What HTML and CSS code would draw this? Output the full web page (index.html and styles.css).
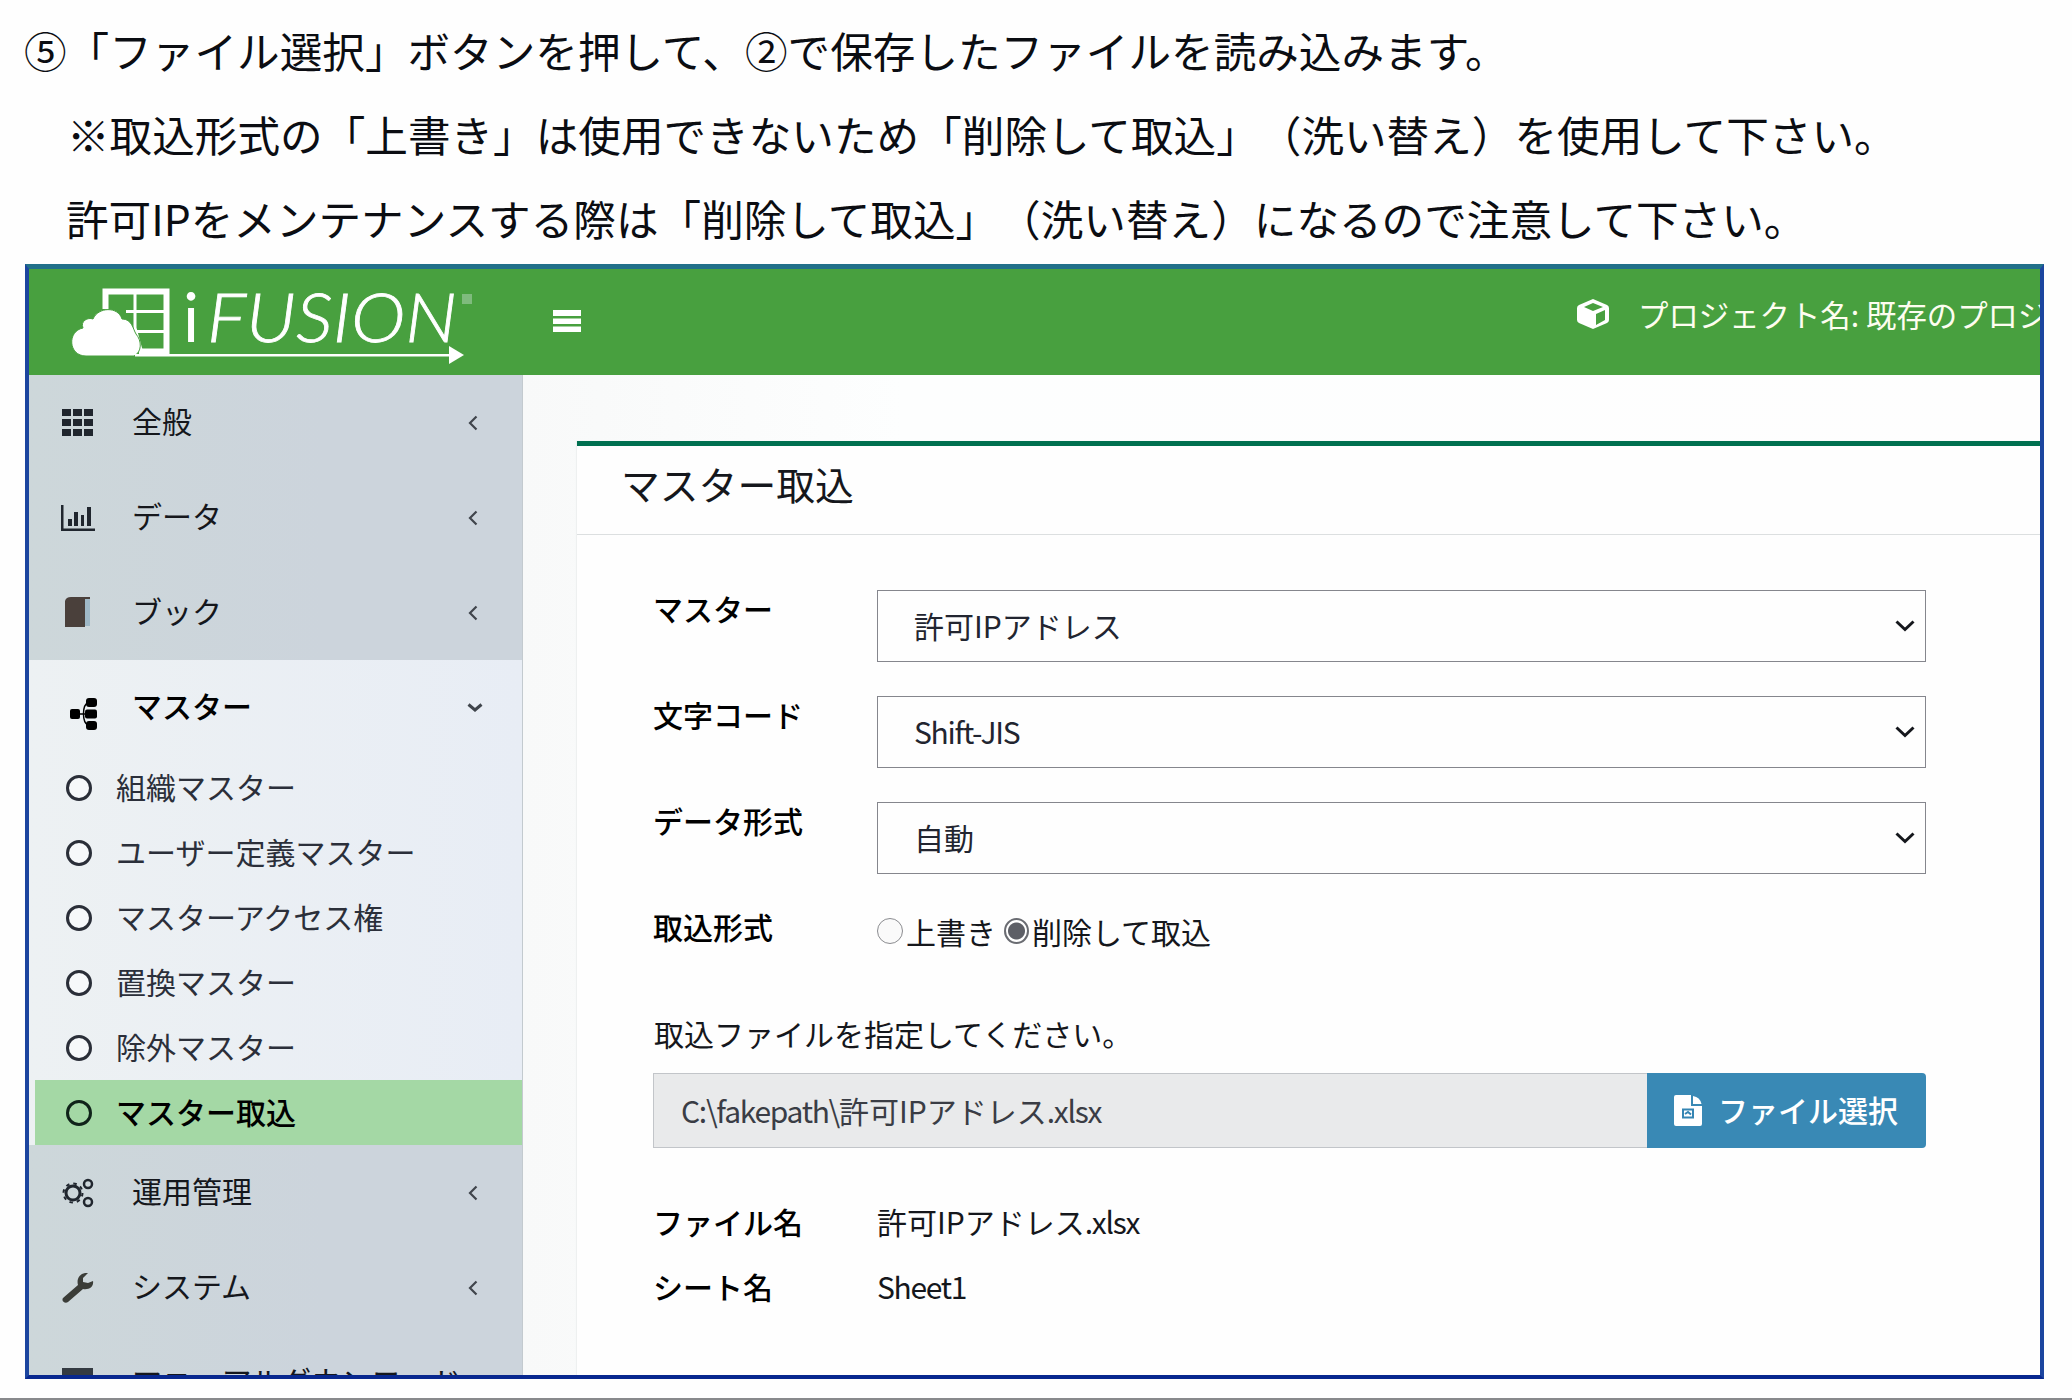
FILE: index.html
```html
<!DOCTYPE html>
<html lang="ja">
<head>
<meta charset="utf-8">
<title>マスター取込</title>
<link rel="stylesheet" href="styles.css">
</head>
<body>
<div class="guide">
  <p class="guide-line">⑤「ファイル選択」ボタンを押して、②で保存したファイルを読み込みます。</p>
  <p class="guide-line guide-sub">※取込形式の「上書き」は使用できないため「削除して取込」（洗い替え）を使用して下さい。</p>
  <p class="guide-line guide-sub last">許可IPをメンテナンスする際は「削除して取込」（洗い替え）になるので注意して下さい。</p>
</div>

<div class="app">
  <header class="topbar">
    <svg class="logo" width="410" height="84" viewBox="0 0 410 84" fill="#fff">
      <path d="M34.500 21V3.500H95.500V63.500H68" fill="none" stroke="#fff" stroke-width="6"/>
      <path d="M64 4V40L70 62M55 23.500H94M66 43.500H94" fill="none" stroke="#fff" stroke-width="3"/>
      <path d="M15 68C-3 68-4 43 12 40C9 33 17 29 22 31C27 19 47 18 51 31C61 31 62 41 65 46C71 53 71 64 63 68Z" stroke="#48a03f" stroke-width="1"/>
      <path d="M64 66H379V68.500H64Z"/>
      <path d="M378 58L393 67L378 76Z"/>
      <text class="logo-i" x="112" y="54">i</text>
      <text class="logo-name" x="136" y="54" textLength="250" lengthAdjust="spacingAndGlyphs">FUSION</text>
      <rect x="391" y="6" width="10" height="10" fill="#7fbb7d"/>
    </svg>
    <svg class="burger" width="28" height="22" viewBox="0 0 28 22" fill="#fff"><path d="M0 0H28V6H0ZM0 8.500H28V14H0ZM0 16.500H28V22H0Z"/></svg>
    <div class="project">
      <svg width="32" height="30" viewBox="0 0 32 30"><path d="M16 0L30 6Q32 7 32 9V21Q32 23 30 24L16 30L2 24Q0 23 0 21V9Q0 7 2 6Z" fill="#fff"/><path d="M7 8L16 4L26 8L16 12ZM19 15L28 11V21L19 26Z" fill="#48a03f"/></svg>
      <span>プロジェクト名: 既存のプロジ</span>
    </div>
  </header>

  <div class="main">
    <nav class="sidebar">
      <a class="item"><svg class="ic" width="32" height="28" viewBox="0 0 32 28"><path d="M0 0H9V7H0ZM11 0H20V7H11ZM22 0H31V7H22ZM0 10H9V17H0ZM11 10H20V17H11ZM22 10H31V17H22ZM0 20H9V27H0ZM11 20H20V27H11ZM22 20H31V27H22Z"/></svg><span>全般</span><svg class="arrow" width="10" height="16" viewBox="0 0 10 16"><path d="M8.500 1.500L2 8L8.500 14.500"/></svg></a>
      <a class="item"><svg class="ic" width="34" height="28" viewBox="0 0 34 28"><path d="M0 1H2.500V24.500H34V27H0ZM7 15H11V22H7ZM13 8H17V22H13ZM20 11H23V22H20ZM26 3H30V22H26Z"/></svg><span>データ</span><svg class="arrow" width="10" height="16" viewBox="0 0 10 16"><path d="M8.500 1.500L2 8L8.500 14.500"/></svg></a>
      <a class="item"><svg class="ic book" width="30" height="32" viewBox="0 0 30 32"><path d="M22 2H27V29H22Z" fill="#9fb8c6"/><path d="M2 4Q3 0 8 0H27V2H22V30H2Z" fill="#4a403b"/></svg><span>ブック</span><svg class="arrow" width="10" height="16" viewBox="0 0 10 16"><path d="M8.500 1.500L2 8L8.500 14.500"/></svg></a>

      <div class="open">
        <a class="item strong"><svg class="ic tree" width="28" height="32" viewBox="0 0 28 32"><path d="M8 16H18M18 5C12 7 12 24 18 27" fill="none" stroke="#000" stroke-width="1.500"/><rect x="0" y="11" width="10" height="10" rx="2"/><rect x="16" y="0" width="11" height="9" rx="3"/><rect x="15" y="11.500" width="12" height="9" rx="2"/><rect x="16" y="23" width="11" height="9" rx="3"/></svg><span>マスター</span><svg class="arrow down" width="16" height="10" viewBox="0 0 16 10"><path d="M1.500 1.500L8 7L14.500 1.500"/></svg></a>
        <a class="sub"><i></i><span>組織マスター</span></a>
        <a class="sub"><i></i><span>ユーザー定義マスター</span></a>
        <a class="sub"><i></i><span>マスターアクセス権</span></a>
        <a class="sub"><i></i><span>置換マスター</span></a>
        <a class="sub"><i></i><span>除外マスター</span></a>
        <a class="sub active"><i></i><span>マスター取込</span></a>
      </div>

      <a class="item"><svg class="ic" width="32" height="30" viewBox="0 0 32 30"><g fill="none" stroke="#20262e"><circle cx="11" cy="15" r="7" stroke-width="3"/><circle cx="11" cy="15" r="9.500" stroke-width="2" stroke-dasharray="3.500 3.960"/><circle cx="26" cy="6" r="4" stroke-width="2.500"/><circle cx="26" cy="24" r="4" stroke-width="2.500"/></g></svg><span>運用管理</span><svg class="arrow" width="10" height="16" viewBox="0 0 10 16"><path d="M8.500 1.500L2 8L8.500 14.500"/></svg></a>
      <a class="item"><svg class="ic wrench" width="32" height="30" viewBox="0 0 32 30"><path d="M26 0L21 5V9L26 10L31 8C32 14 27 17 21 16L6 29C3 31-1 28 1 25L16 12C14 5 19-1 26 0Z" fill="#3b3d38"/></svg><span>システム</span><svg class="arrow" width="10" height="16" viewBox="0 0 10 16"><path d="M8.500 1.500L2 8L8.500 14.500"/></svg></a>
      <a class="item"><svg class="ic" width="32" height="30" viewBox="0 0 32 30"><path d="M0 0H31V8H0ZM4 10H28V28H4Z" fill="#343b42"/></svg><span>マニュアルダウンロード</span></a>
    </nav>

    <div class="content">
      <section class="panel">
        <h1>マスター取込</h1>
        <div class="form">
          <div class="row">
            <label>マスター</label>
            <div class="select"><span>許可IPアドレス</span><svg width="20" height="12" viewBox="0 0 20 12"><path d="M1.500 1.500L10 9.500L18.500 1.500"/></svg></div>
          </div>
          <div class="row">
            <label>文字コード</label>
            <div class="select"><span class="latin">Shift-JIS</span><svg width="20" height="12" viewBox="0 0 20 12"><path d="M1.500 1.500L10 9.500L18.500 1.500"/></svg></div>
          </div>
          <div class="row">
            <label>データ形式</label>
            <div class="select"><span>自動</span><svg width="20" height="12" viewBox="0 0 20 12"><path d="M1.500 1.500L10 9.500L18.500 1.500"/></svg></div>
          </div>
          <div class="row radios">
            <label>取込形式</label>
            <div class="choices"><i class="radio"></i><span class="choice">上書き</span><i class="radio on"></i><span class="choice">削除して取込</span></div>
          </div>
          <p class="hint">取込ファイルを指定してください。</p>
          <div class="file">
            <div class="path"><span class="latin">C:\fakepath\</span>許可IPアドレス<span class="latin">.xlsx</span></div>
            <div class="button">
              <svg width="28" height="31" viewBox="0 0 28 31"><path d="M2 0H17V11H28V29Q28 31 26 31H2Q0 31 0 29V2Q0 0 2 0Z" fill="#fff"/><path d="M19 1Q26 2 27.500 9H19Z" fill="#fff"/><path d="M9 14.500H19V22.500H9ZM11 19L14 17L17 19.500" fill="none" stroke="#3585b3" stroke-width="2"/></svg>
              <span>ファイル選択</span>
            </div>
          </div>
          <dl>
            <dt>ファイル名</dt><dd>許可IPアドレス<span class="latin">.xlsx</span></dd>
            <dt>シート名</dt><dd><span class="latin">Sheet1</span></dd>
          </dl>
        </div>
      </section>
    </div>
  </div>
</div>
</body>
</html>
```
FILE: styles.css
```css
* { box-sizing: border-box; }
html, body { height: 100%; }
body {
  margin: 0;
  padding: 8px 28px 0 25px;
  height: 1400px;
  overflow: hidden;
  background: #fefefe;
  border-bottom: 2px solid #88898c;
  color: #15171c;
  font-family: "Noto Sans CJK JP", sans-serif;
  font-size: 30px;
  text-spacing-trim: space-all;
}
p, h1, dl, dd { margin: 0; }

.guide { height: 256px; font-size: 42.620px; color: #0b0d12; }
.guide-line { height: 84px; line-height: 84px; white-space: nowrap; margin-left: -1px; }
.guide-sub { margin-left: 42px; }
.guide-sub.last { margin-left: 41px; }

.app {
  height: 1115px;
  display: flex;
  flex-direction: column;
  border: 4px solid #1c459f;
  border-top: 5px solid #22708a;
  border-bottom-color: #08288f;
  overflow: hidden;
}
.topbar {
  height: 106px;
  flex: none;
  display: flex;
  background: #48a03f;
  color: #fdfdf0;
}
.logo { margin: 19px 0 0 42px; flex: none; }
.logo-i, .logo-name { font-family: Lato, sans-serif; font-size: 67px; }
.logo-name { font-style: italic; font-weight: 300; stroke: #fff; stroke-width: 0.8; }
.burger { margin: 41px 0 0 72px; flex: none; }
.project {
  margin-left: auto;
  width: 463px;
  height: 90px;
  display: flex;
  align-items: center;
  gap: 29px;
  white-space: nowrap;
  overflow: hidden;
  font-size: 30.400px;
}
.project svg { flex: none; }

.main { flex: 1; min-height: 0; display: flex; }
.sidebar {
  width: 494px;
  flex: none;
  background: linear-gradient(90deg, #cdd7da, #ccd4dc 60%);
  border-right: 1px solid #c3cacf;
  overflow: hidden;
}
.item { height: 95px; display: flex; align-items: center; padding: 0 45px 0 32px; }
.item span { width: 350px; flex: none; white-space: nowrap; padding-bottom: 5px; }
.item .arrow { margin-left: -22px; }
.ic { flex: none; fill: #20262e; }
.item .ic { width: 34px; margin-right: 37px; }
.arrow { flex: none; fill: none; stroke: #40454c; stroke-width: 2.200; }
.item .arrow { margin-left: -14px; }
.item .arrow.down { margin-left: -15px; stroke-width: 3; }
.open { background: linear-gradient(90deg, #edf1f3, #e8edf5); }
.strong { color: #000; font-weight: 500; }
.strong .tree { fill: #000; position: relative; left: 6px; top: 6px; }
.sub { height: 65px; display: flex; align-items: center; padding-left: 37px; color: #2b2f3a; }
.sub i { width: 26px; height: 26px; border: 3px solid #2a2e38; border-radius: 50%; margin-right: 24px; background: #f6f8fa; }
.sub span { padding-bottom: 4px; }
.sub.active { background: #a4d8a5; margin-left: 6px; padding-left: 31px; color: #000; font-weight: 500; }
.sub.active i { background: none; border-color: #10231a; }

.content { flex: 1; min-width: 0; padding: 66px 0 0 54px; background: linear-gradient(90deg, #f8f9f9, #fdfefe 25%, #fefefe); }
.panel { height: 100%; border-top: 5px solid #007050; background: #fefefe; box-shadow: -1px 0 1px #eef0f0; }
h1 { height: 89px; line-height: 75px; padding-left: 44px; font-size: 38.800px; font-weight: 400; border-bottom: 1px solid #dcdfe0; }
.form { padding: 55px 114px 0 76px; }
.row { display: flex; height: 72px; margin-bottom: 34px; }
label { width: 224px; flex: none; line-height: 37px; font-weight: 500; color: #000; }
.select {
  flex: 1;
  display: flex;
  align-items: center;
  justify-content: space-between;
  border: 1px solid #85868d;
  padding: 0 10px 0 36px;
  color: #222530;
}
.select span { padding-bottom: 2px; }
.latin { letter-spacing: -1.300px; }
.select svg { fill: none; stroke: #15171c; stroke-width: 3; }
.radios { margin-bottom: 22px; }
.choices { display: flex; height: 46px; align-items: center; }
.radio { width: 26px; height: 26px; border: 1px solid #8b8c90; border-radius: 50%; background: #fafafa; }
.radio.on { width: 25px; margin-left: 8px; border: 2px solid #6a6c72; background: radial-gradient(circle, #5d5f66 8px, #fff 9px); }
.choice { margin-left: 3px; white-space: nowrap; }
.hint { height: 71px; line-height: 62px; padding-left: 1px; }
.file { display: flex; height: 75px; }
.path { flex: 1; line-height: 72px; padding-left: 27px; background: #e9eaeb; border: 1px solid #c2c5c9; border-right: 0; color: #3a3d45; }
.button { width: 279px; display: flex; align-items: center; padding: 0 0 0 27px; gap: 16px; background: #3989b5; border-radius: 0 4px 4px 0; color: #fff; font-weight: 500; white-space: nowrap; }
.button span { padding-bottom: 3px; }
dl { display: grid; grid-template-columns: 224px 1fr; grid-auto-rows: 65px; line-height: 64px; margin-top: 41px; }
dt { font-weight: 500; color: #000; }
```
